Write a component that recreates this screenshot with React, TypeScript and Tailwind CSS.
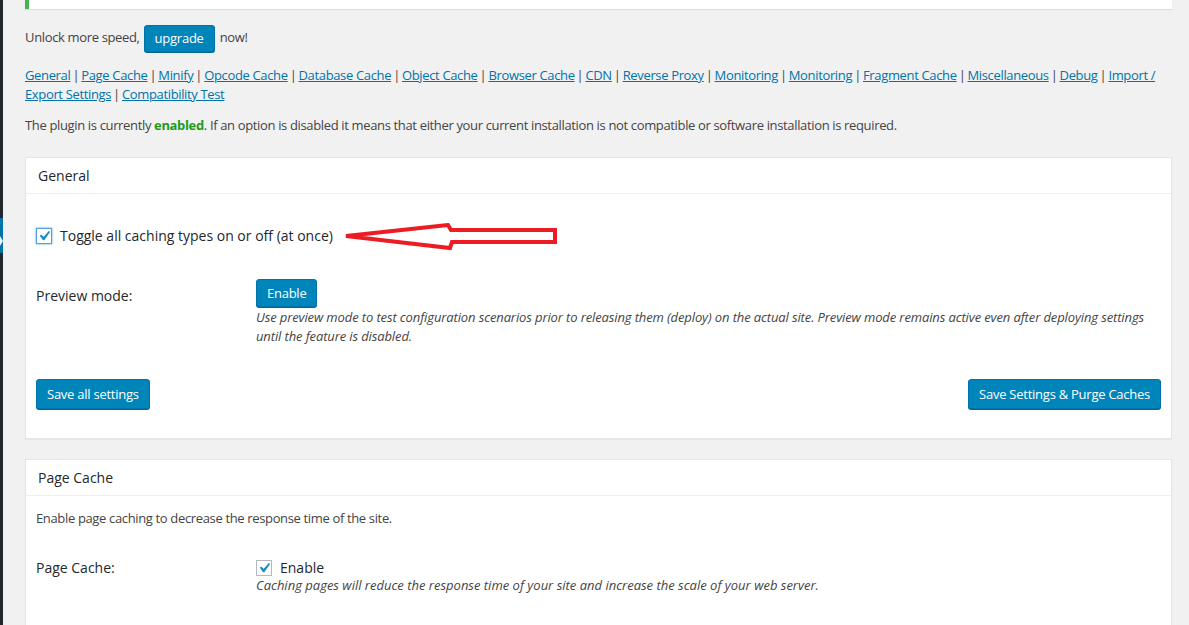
import React from "react";

const links = [
  "General",
  "Page Cache",
  "Minify",
  "Opcode Cache",
  "Database Cache",
  "Object Cache",
  "Browser Cache",
  "CDN",
  "Reverse Proxy",
  "Monitoring",
  "Monitoring",
  "Fragment Cache",
  "Miscellaneous",
  "Debug",
  "Import / Export Settings",
  "Compatibility Test",
];

function Btn({ children, className = "" }: { children: React.ReactNode; className?: string }) {
  return (
    <button
      className={
        "bg-[#0085ba] border border-[#0073aa] text-white rounded-[3px] shadow-[0_1px_0_#006799] text-[13px] leading-none px-[10px] tracking-[-0.25px] " +
        className
      }
    >
      {children}
    </button>
  );
}

function Check({ focus = false }: { focus?: boolean }) {
  return (
    <span
      className={
        "inline-flex items-center justify-center w-4 h-4 bg-white border shrink-0 " +
        (focus ? "border-[#5b9dd9] shadow-[0_0_2px_rgba(30,140,190,0.8)]" : "border-[#b4b9be]")
      }
    >
      <svg width="20" height="20" viewBox="0 0 20 20" className="-m-[3px]">
        <path d="M14.83 4.89l1.34.94-5.81 8.38H9.02L5.78 9.67l1.34-1.25 2.57 2.4z" fill="#1e8cbe" />
      </svg>
    </span>
  );
}

export default function App() {
  return (
    <div
      className="flex min-h-[625px] bg-[#f1f1f1] text-[13px] text-[#444] overflow-hidden"
      style={{ fontFamily: '"Open Sans", "Noto Sans", sans-serif' }}
    >
      <div className="w-[3px] bg-[#23282d] flex flex-col shrink-0">
        <div className="h-[218px]" />
        <div className="h-[35px] bg-[#0073aa] relative">
          <span className="absolute left-0 top-[18px] w-0 h-0 border-y-[5px] border-y-transparent border-l-[3px] border-l-[#f1f1f1]" />
        </div>
      </div>
      <div className="flex-1 pl-[22px] pr-[17px]">
        <div className="h-[9px] bg-white border-l-4 border-[#46b450] shadow-[0_1px_1px_rgba(0,0,0,0.08)]" />
        <div className="flex items-center h-[28px] mt-[15px] tracking-[-0.35px]">
          <span>Unlock more speed,</span>
          <Btn className="h-[27px] ml-[4px] mr-[5px] text-[13px] px-[9px]">upgrade</Btn>
          <span>now!</span>
        </div>
        <p className="mt-[14px] leading-[19px] tracking-[-0.35px]">
          {links.map((l, i) => (
            <React.Fragment key={i}>
              <a className="text-[#0073aa] underline">{l}</a>
              {i < links.length - 1 ? <span className="[word-spacing:-1px]"> | </span> : null}
            </React.Fragment>
          ))}
        </p>
        <p className="mt-[12px] leading-[19px] tracking-[-0.35px]">
          The plugin is currently <b className="text-[#1e9c1e] font-bold">enabled</b>. If an option is disabled it
          means that either your current installation is not compatible or software installation is required.
        </p>

        <div className="mt-[22px] bg-white border border-[#e5e5e5] shadow-[0_1px_1px_rgba(0,0,0,0.04)]">
          <div className="h-[36px] flex items-center px-[12px] border-b border-[#eee] text-[14px] text-[#23282d]">
            General
          </div>
          <div className="px-[10px] pb-[29px]">
            <div className="mt-[31px] flex items-center gap-[8px] text-[14px] text-[#23282d] relative">
              <Check focus />
              <span>Toggle all caching types on or off (at once)</span>
              <svg
                className="absolute left-[308px] top-[-2px]"
                width="216"
                height="30"
                viewBox="0 0 216 30"
              >
                <polygon
                  points="2,13 104,2 107,7 211,7 211,19 108,19 106,25"
                  fill="none"
                  stroke="#ed1c24"
                  strokeWidth="4"
                  strokeLinejoin="miter"
                />
              </svg>
            </div>
            <div className="mt-[33px] flex">
              <div className="w-[220px] shrink-0 pt-[6px] text-[14px] text-[#23282d]">Preview mode:</div>
              <div className="flex-1">
                <Btn className="h-[28px]">Enable</Btn>
                <p className="italic leading-[19px] mt-[1px] tracking-[-0.12px]">
                  Use preview mode to test configuration scenarios prior to releasing them (deploy) on the actual site.
                  Preview mode remains active even after deploying settings until the feature is disabled.
                </p>
              </div>
            </div>
            <div className="mt-[33px] flex justify-between">
              <Btn className="h-[30px]">Save all settings</Btn>
              <Btn className="h-[30px]">Save Settings &amp; Purge Caches</Btn>
            </div>
          </div>
        </div>

        <div className="mt-[20px] bg-white border border-[#e5e5e5] shadow-[0_1px_1px_rgba(0,0,0,0.04)] pb-[60px]">
          <div className="h-[36px] flex items-center px-[12px] border-b border-[#eee] text-[14px] text-[#23282d]">
            Page Cache
          </div>
          <div className="px-[10px]">
            <p className="mt-[13px] leading-[19px] tracking-[-0.35px]">
              Enable page caching to decrease the response time of the site.
            </p>
            <div className="mt-[29px] flex">
              <div className="w-[220px] shrink-0 text-[14px] text-[#23282d]">Page Cache:</div>
              <div className="flex-1">
                <label className="flex items-center gap-[8px] text-[14px] text-[#23282d]">
                  <Check />
                  <span>Enable</span>
                </label>
                <p className="italic leading-[19px] -mt-[2px]">
                  Caching pages will reduce the response time of your site and increase the scale of your web server.
                </p>
              </div>
            </div>
          </div>
        </div>
      </div>
    </div>
  );
}
